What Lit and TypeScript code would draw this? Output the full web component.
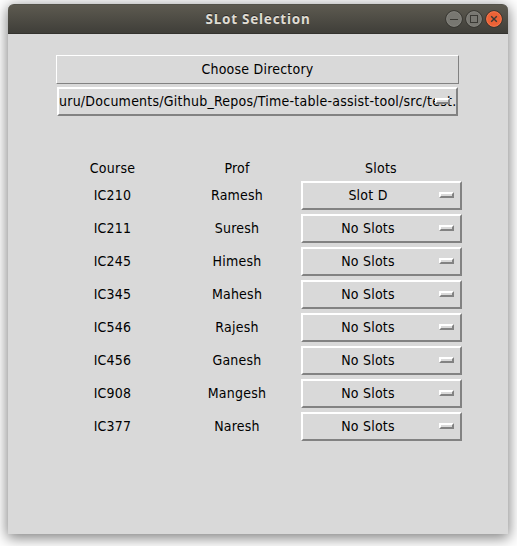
import { LitElement, html, css, svg } from "lit";
import { customElement, property, state } from "lit/decorators.js";

@customElement("option-menu")
class OptionMenu extends LitElement {
  @property() label = "";

  static styles = css`
    :host {
      display: flex;
      box-sizing: border-box;
      height: 29px;
      border: 2px solid;
      border-color: #fff #828282 #828282 #fff;
      align-items: center;
      position: relative;
      overflow: hidden;
      white-space: pre;
    }
    .label {
      flex: 1;
      display: flex;
      justify-content: center;
      padding-right: var(--label-pad, 27px);
      line-height: 17px;
    }
    .mark {
      position: absolute;
      right: 6px;
      top: 9px;
      width: 15px;
      height: 6px;
      box-sizing: border-box;
      border: 2px solid;
      border-color: #fff #828282 #828282 #fff;
      background: #d9d9d9;
    }
  `;

  render() {
    return html`<span class="label">${this.label}</span><span class="mark"></span>`;
  }
}

@customElement("app-root")
class AppRoot extends LitElement {
  @state() rows = [
    ["IC210", "Ramesh", "Slot D"],
    ["IC211", "Suresh", "No Slots"],
    ["IC245", "Himesh", "No Slots"],
    ["IC345", "Mahesh", "No Slots"],
    ["IC546", "Rajesh", "No Slots"],
    ["IC456", "Ganesh", "No Slots"],
    ["IC908", "Mangesh", "No Slots"],
    ["IC377", "Naresh", "No Slots"],
  ];

  static styles = css`
    :host {
      display: block;
      box-sizing: border-box;
      height: 546px;
      padding: 4px 9px 12px 8px;
      overflow: hidden;
      background: #fff;
      font-family: "DejaVu Sans Condensed", "DejaVu Sans", sans-serif;
      font-stretch: condensed;
      font-size: 14px;
      letter-spacing: 0.22px;
      color: #000;
    }
    .window {
      height: 530px;
      border-radius: 6px 6px 0 0;
      background: #d9d9d9;
      box-shadow: 0 3px 14px 1px rgba(0, 0, 0, 0.5);
    }
    .title {
      height: 30px;
      box-sizing: border-box;
      border-radius: 6px 6px 0 0;
      border-top: 1px solid #54534a;
      border-bottom: 1px solid #33322e;
      background: linear-gradient(#5d5a50, #3f3e39);
      display: grid;
      grid-template-columns: 1fr auto 1fr;
      align-items: center;
      color: #dfdbd2;
      font: bold 13.5px/28px "Noto Sans", sans-serif;
      letter-spacing: 0.75px;
      text-shadow: 0 -1px #2b2a27;
    }
    .name {
      grid-column: 2;
    }
    .controls {
      justify-self: end;
      display: flex;
      gap: 2px;
      padding-right: 5px;
    }
    .controls svg {
      display: block;
    }
    .body {
      display: flex;
      flex-direction: column;
      padding: 21px 46px 0 48px;
    }
    .choose {
      box-sizing: border-box;
      width: 403px;
      height: 29px;
      border: 1px solid;
      border-color: #fff #828282 #828282 #fff;
      text-align: center;
      line-height: 27px;
    }
    .path {
      --label-pad: 0;
      width: 401px;
      margin: 3px 0 0 1px;
      letter-spacing: 0.24px;
    }
    .grid {
      display: grid;
      grid-template-columns: 113px 136px 161px;
      justify-content: start;
      row-gap: 4px;
      margin: 43px -10px 0 0;
      line-height: 29px;
      text-align: center;
    }
    .grid > option-menu {
      margin: 0 4px 0 -4px;
    }
    .head {
      height: 18px;
      line-height: 18px;
    }
    .slots {
      padding-right: 9px;
    }
  `;

  private control(kind: string) {
    const close = kind === "close";
    const glyph =
      kind === "min"
        ? svg`<path d="M5 9.5h8"/>`
        : kind === "max"
          ? svg`<rect x="5.5" y="5.5" width="7" height="7"/>`
          : svg`<path d="M6.2 6.2l5.6 5.6M11.8 6.2l-5.6 5.6" stroke-width="1.4"/>`;
    return html`<svg width="18" height="18" viewBox="0 0 18 18">
      <circle cx="9" cy="9" r="8.3" fill=${close ? "#e9592c" : "#74736d"} stroke="#34332e" />
      <circle cx="9" cy="9" r="7.3" fill=${close ? "#ed6236" : "#787771"} stroke=${close ? "#f47e55" : "#85847d"} stroke-width=".8" />
      <g fill="none" stroke="#3a3934">${glyph}</g>
    </svg>`;
  }

  render() {
    return html`<div class="window">
      <div class="title">
        <span class="name">SLot Selection</span>
        <div class="controls">${["min", "max", "close"].map((k) => this.control(k))}</div>
      </div>
      <div class="body">
        <div class="choose">Choose Directory</div>
        <option-menu class="path" label="uru/Documents/Github_Repos/Time-table-assist-tool/src/test."></option-menu>
        <div class="grid">
          <div class="head">Course</div>
          <div class="head">Prof</div>
          <div class="head slots">Slots</div>
          ${this.rows.map(
            ([course, prof, slot]) => html`<div>${course}</div>
              <div>${prof}</div>
              <option-menu label=${slot}></option-menu>`,
          )}
        </div>
      </div>
    </div>`;
  }
}
